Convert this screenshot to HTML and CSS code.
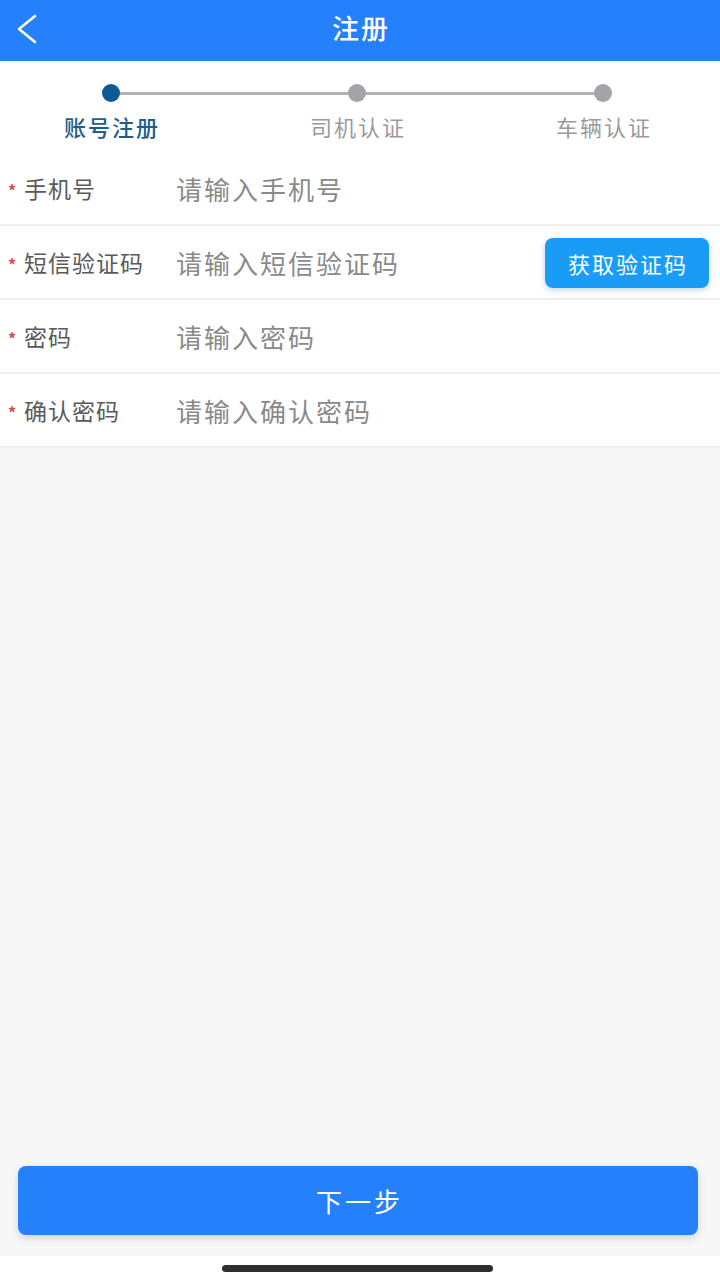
FILE: index.html
```html
<!DOCTYPE html>
<html lang="zh">
<head>
<meta charset="utf-8">
<title>注册</title>
<link rel="stylesheet" href="styles.css">
</head>
<body>
<div class="page">
  <header class="topbar">
    <svg class="back" width="24" height="32" viewBox="0 0 24 32">
      <polyline points="20,3 4,16 20,29" fill="none" stroke="#ffffff" stroke-width="2.6" stroke-linecap="round" stroke-linejoin="round"/>
    </svg>
    <h1 class="title">注册</h1>
  </header>

  <section class="steps">
    <div class="step active"><span class="dot"></span><span class="step-label">账号注册</span></div>
    <div class="step"><span class="dot"></span><span class="step-label">司机认证</span></div>
    <div class="step"><span class="dot"></span><span class="step-label">车辆认证</span></div>
  </section>

  <section class="form">
    <div class="row">
      <span class="label"><i class="req">*</i>手机号</span>
      <span class="ph">请输入手机号</span>
    </div>
    <div class="row">
      <span class="label"><i class="req">*</i>短信验证码</span>
      <span class="ph">请输入短信验证码</span>
      <button class="code-btn">获取验证码</button>
    </div>
    <div class="row">
      <span class="label"><i class="req">*</i>密码</span>
      <span class="ph">请输入密码</span>
    </div>
    <div class="row">
      <span class="label"><i class="req">*</i>确认密码</span>
      <span class="ph">请输入确认密码</span>
    </div>
  </section>

  <div class="spacer"></div>

  <div class="footer">
    <button class="next-btn">下一步</button>
  </div>

  <div class="home"><span class="home-bar"></span></div>
</div>
</body>
</html>
```

FILE: styles.css
```css
* { box-sizing: border-box; }
html, body { margin: 0; padding: 0; }
body {
  width: 720px;
  height: 1280px;
  overflow: hidden;
  background: #f7f7f7;
  font-family: "Noto Sans CJK SC", "Noto Sans", sans-serif;
}
.page {
  display: flex;
  flex-direction: column;
  height: 1280px;
}
.topbar {
  height: 61px;
  background: #2580fb;
  display: flex;
  align-items: center;
  justify-content: center;
  position: relative;
  flex: none;
  padding-bottom: 6px;
}
.back {
  position: absolute;
  left: 15px;
  top: 13px;
}
.title {
  margin: 0;
  color: #ffffff;
  font-size: 27px;
  font-weight: 500;
  letter-spacing: 2px;
  padding-left: 2px;
  line-height: 1;
}
.steps {
  flex: none;
  height: 91px;
  background: #ffffff;
  width: 738px;
  margin-left: -12px;
  display: grid;
  grid-template-columns: repeat(3, 246px);
  position: relative;
}
.steps::before {
  content: "";
  position: absolute;
  left: 123px;
  right: 123px;
  top: 31px;
  height: 3px;
  background: #b3b3b3;
}
.step {
  display: flex;
  flex-direction: column;
  align-items: center;
  position: relative;
}
.dot {
  width: 18px;
  height: 18px;
  border-radius: 50%;
  background: #a3a3a8;
  margin-top: 23px;
}
.step.active .dot { background: #0b5a96; }
.step-label {
  margin-top: 9px;
  font-size: 22px;
  line-height: 30px;
  letter-spacing: 2px;
  padding-left: 2px;
  color: #9a9a9a;
}
.step.active .step-label { color: #205e8a; font-weight: 500; }

.form {
  flex: none;
  background: #ffffff;
}
.row {
  height: 74px;
  display: flex;
  align-items: center;
  border-bottom: 2px solid #efefef;
  padding-left: 8px;
  padding-right: 11px;
}
.label {
  width: 168px;
  flex: none;
  font-size: 23px;
  letter-spacing: 1px;
  color: #5a5a5a;
  display: flex;
  align-items: center;
}
.req {
  font-style: normal;
  color: #e0474c;
  font-size: 16px;
  font-weight: 700;
  width: 16px;
  letter-spacing: 0;
  margin-top: 4px;
}
.ph {
  flex: 1;
  font-size: 26px;
  letter-spacing: 2px;
  color: #8a8a8a;
}
.code-btn {
  flex: none;
  width: 164px;
  height: 50px;
  margin-top: 2px;
  border: none;
  border-radius: 8px;
  background: #1a9bf6;
  color: #ffffff;
  font-family: inherit;
  font-size: 22px;
  letter-spacing: 2px;
  padding: 0 0 0 2px;
  box-shadow: 0 2px 6px rgba(0, 80, 160, 0.25);
}
.spacer { flex: 1; }
.footer {
  flex: none;
  padding: 0 22px 21px 18px;
}
.next-btn {
  width: 100%;
  height: 69px;
  border: none;
  border-radius: 8px;
  background: #2580fb;
  color: #ffffff;
  font-family: inherit;
  font-size: 26px;
  letter-spacing: 3px;
  padding: 0 0 0 3px;
  box-shadow: 0 3px 8px rgba(0, 0, 0, 0.15);
}
.home {
  flex: none;
  height: 24px;
  background: #ffffff;
  display: flex;
  justify-content: center;
  padding-top: 9px;
  padding-right: 6px;
}
.home-bar {
  width: 271px;
  height: 7px;
  border-radius: 4px;
  background: #2e2e2e;
}
```
